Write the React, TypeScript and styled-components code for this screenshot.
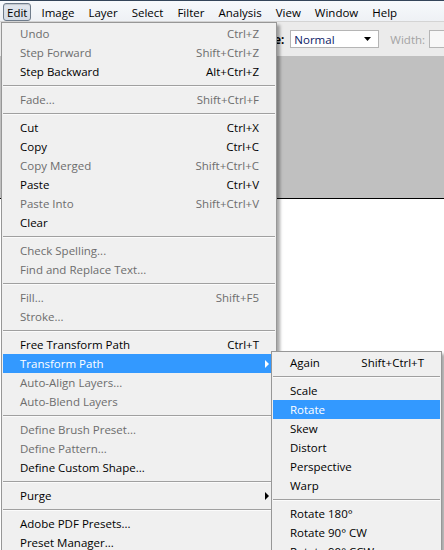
import React from "react";
import styled, { createGlobalStyle, css } from "styled-components";

const GlobalStyle = createGlobalStyle`
    html, body {
        margin: 0;
        padding: 0;
        background: #ffffff;
    }
    body {
        font-family: "Open Sans", "Liberation Sans", sans-serif;
        font-size: 11.5px;
    }
`

const Screen = styled.div`
    position: relative;
    width: 444px;
    height: 550px;
    overflow: hidden;
    display: flex;
    flex-direction: column;
    background: #ffffff;
`

const MenuBar = styled.div`
    display: flex;
    align-items: flex-start;
    height: 21px;
    padding-top: 2px;
    box-sizing: border-box;
    border-top: 1px solid #34455a;
    background: linear-gradient(#f7f9fc, #eef1f5);
    color: #000;
`

const MenuTitle = styled.div<{ $open?: boolean }>`
    height: 18px;
    line-height: 17px;
    margin: 0 3px;
    padding: 0 3px;
    box-sizing: border-box;
    border: 1px solid transparent;
    border-radius: 3px;
    ${p => p.$open && css`
        border-color: #6f7c8b;
        background: linear-gradient(#e3e8ef, #d5dce6);
        box-shadow: inset 0 1px 1px rgba(0,0,0,0.15);
    `}
`

const Toolbar = styled.div`
    display: flex;
    align-items: center;
    height: 35px;
    padding-left: 249px;
    overflow: hidden;
    background: #ebebeb;
    border-top: 1px solid #d4d4d4;
    box-sizing: border-box;
    & > * {
        flex-shrink: 0;
    }
`

const Label = styled.span<{ $muted?: boolean }>`
    font-weight: ${p => (p.$muted ? 400 : 700)};
    color: ${p => (p.$muted ? "#a3a3a3" : "#000")};
    margin-right: ${p => (p.$muted ? 4 : 6)}px;
`

const Select = styled.div`
    display: flex;
    align-items: center;
    justify-content: space-between;
    width: 89px;
    height: 18px;
    padding: 0 7px 0 3px;
    margin-right: 11px;
    box-sizing: border-box;
    background: #fff;
    border: 1px solid #b5b5b5;
    color: #0b1a66;
`

const Input = styled.div`
    width: 40px;
    height: 18px;
    box-sizing: border-box;
    background: #f7f7f7;
    border: 1px solid #b5b5b5;
`

const Pasteboard = styled.div`
    height: 142px;
    background: #c0c0c0;
    border-bottom: 1px solid #000;
`

const Document = styled.div`
    flex: 1;
    background: #fff;
`

const Dropdown = styled.div<{ $left: number; $top: number; $width: number }>`
    position: absolute;
    left: ${p => p.$left}px;
    top: ${p => p.$top}px;
    width: ${p => p.$width}px;
    padding: 1px;
    box-sizing: border-box;
    background: #f0f0f0;
    border: 1px solid #979797;
    box-shadow: 3px 3px 3px rgba(0, 0, 0, 0.35);
`

const Item = styled.div<{ $disabled?: boolean; $active?: boolean; $pad: number }>`
    display: grid;
    grid-template-columns: 1fr auto 16px;
    align-items: center;
    height: 19px;
    padding-left: ${p => p.$pad}px;
    white-space: nowrap;
    color: ${p => (p.$disabled ? "#6d6d6d" : "#000")};
    ${p => p.$active && css`
        background: #3399ff;
        color: #fff;
    `}
`

const Arrow = styled.span<{ $active?: boolean }>`
    justify-self: start;
    margin-left: 6px;
    width: 0;
    height: 0;
    border-top: 4px solid transparent;
    border-bottom: 4px solid transparent;
    border-left: 4px solid ${p => (p.$active ? "#fff" : "#000")};
`

const Separator = styled.div`
    height: 1px;
    margin: 4px 0 3px;
    background: #a0a0a0;
    border-bottom: 1px solid #fbfbfb;
`

type Entry = { label?: string; key?: string; disabled?: boolean; active?: boolean; sub?: boolean } | "sep";

const editMenu: Entry[] = [
    { label: "Undo", key: "Ctrl+Z", disabled: true },
    { label: "Step Forward", key: "Shift+Ctrl+Z", disabled: true },
    { label: "Step Backward", key: "Alt+Ctrl+Z" },
    "sep",
    { label: "Fade...", key: "Shift+Ctrl+F", disabled: true },
    "sep",
    { label: "Cut", key: "Ctrl+X" },
    { label: "Copy", key: "Ctrl+C" },
    { label: "Copy Merged", key: "Shift+Ctrl+C", disabled: true },
    { label: "Paste", key: "Ctrl+V" },
    { label: "Paste Into", key: "Shift+Ctrl+V", disabled: true },
    { label: "Clear" },
    "sep",
    { label: "Check Spelling...", disabled: true },
    { label: "Find and Replace Text...", disabled: true },
    "sep",
    { label: "Fill...", key: "Shift+F5", disabled: true },
    { label: "Stroke...", disabled: true },
    "sep",
    { label: "Free Transform Path", key: "Ctrl+T" },
    { label: "Transform Path", active: true, sub: true },
    { label: "Auto-Align Layers...", disabled: true },
    { label: "Auto-Blend Layers", disabled: true },
    "sep",
    { label: "Define Brush Preset...", disabled: true },
    { label: "Define Pattern...", disabled: true },
    { label: "Define Custom Shape..." },
    "sep",
    { label: "Purge", sub: true },
    "sep",
    { label: "Adobe PDF Presets..." },
    { label: "Preset Manager..." },
]

const transformMenu: Entry[] = [
    { label: "Again", key: "Shift+Ctrl+T" },
    "sep",
    { label: "Scale" },
    { label: "Rotate", active: true },
    { label: "Skew" },
    { label: "Distort" },
    { label: "Perspective" },
    { label: "Warp" },
    "sep",
    { label: "Rotate 180°" },
    { label: "Rotate 90° CW" },
    { label: "Rotate 90° CCW" },
]

function Menu({ entries, left, top, width }: { entries: Entry[]; left: number; top: number; width: number }) {
    return (
        <Dropdown $left={left} $top={top} $width={width}>
            {entries.map((e, i) =>
                e === "sep" ? (
                    <Separator key={i} />
                ) : (
                    <Item key={i} $pad={17} $disabled={e.disabled} $active={e.active}>
                        <span>{e.label}</span>
                        <span>{e.key}</span>
                        {e.sub ? <Arrow $active={e.active} /> : <span />}
                    </Item>
                )
            )}
        </Dropdown>
    )
}

export default function App() {
    return (
        <Screen>
            <GlobalStyle />
            <MenuBar>
                <MenuTitle $open>Edit</MenuTitle>
                <MenuTitle>Image</MenuTitle>
                <MenuTitle>Layer</MenuTitle>
                <MenuTitle>Select</MenuTitle>
                <MenuTitle>Filter</MenuTitle>
                <MenuTitle>Analysis</MenuTitle>
                <MenuTitle>View</MenuTitle>
                <MenuTitle>Window</MenuTitle>
                <MenuTitle>Help</MenuTitle>
            </MenuBar>
            <Toolbar>
                <Label>Mode:</Label>
                <Select>
                    <span>Normal</span>
                    <svg width="7" height="4" viewBox="0 0 7 4">
                        <path d="M0 0h7L3.5 4z" fill="#000" />
                    </svg>
                </Select>
                <Label $muted>Width:</Label>
                <Input />
            </Toolbar>
            <Pasteboard />
            <Document />
            <Menu entries={editMenu} left={1} top={22} width={276} />
            <Menu entries={transformMenu} left={271} top={351} width={171} />
        </Screen>
    )
}
